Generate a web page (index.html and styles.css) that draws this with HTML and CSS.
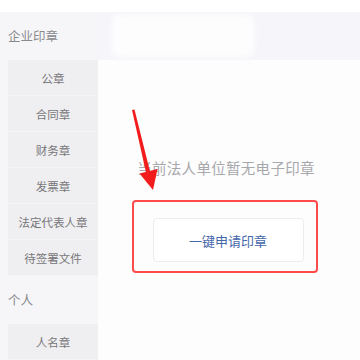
FILE: index.html
```html
<!DOCTYPE html>
<html>
<head>
<meta charset="utf-8">
<link rel="stylesheet" href="styles.css">
</head>
<body>
<div class="topbar"></div>
<div class="main">
  <aside class="sidebar">
    <div class="group-title">企业印章</div>
    <ul class="list">
      <li>公章</li>
      <li>合同章</li>
      <li>财务章</li>
      <li>发票章</li>
      <li>法定代表人章</li>
      <li>待签署文件</li>
    </ul>
    <div class="group-title">个人</div>
    <ul class="list">
      <li>人名章</li>
    </ul>
  </aside>
  <section class="content">
    <div class="header"><div class="blur"></div></div>
    <div class="empty">
      <p class="empty-text">当前法人单位暂无电子印章</p>
      <div class="highlight">
        <button class="apply">一键申请印章</button>
      </div>
    </div>
  </section>
</div>
<svg class="arrow" width="360" height="360" viewBox="0 0 360 360">
  <polygon points="132,110 134.5,109.5 150,171.5 146,172.5" fill="#f21c1c"/>
  <polygon points="139.5,173.5 157.5,169 153,190" fill="#f21c1c"/>
</svg>
</body>
</html>
```
FILE: styles.css
```css
* { box-sizing: border-box; }
html, body { margin: 0; padding: 0; }
body {
  width: 360px;
  height: 360px;
  overflow: hidden;
  background: #f7f7f9;
  font-family: "Noto Sans CJK SC", "Noto Sans", sans-serif;
  position: relative;
}
.topbar { height: 12px; background: #ffffff; }
.main { display: flex; height: 348px; }
.sidebar {
  width: 98px;
  flex: none;
  background: #f6f6f8;
  padding-left: 8px;
}
.group-title {
  height: 48px;
  line-height: 48px;
  font-size: 12.5px;
  color: #8a8a8e;
}
.list { list-style: none; margin: 0; padding: 0; }
.list li {
  height: 36px;
  line-height: 36px;
  text-align: center;
  font-size: 11.5px;
  color: #77777b;
  background: #efeef0;
  border-bottom: 1px solid #f4f4f6;
}
.content { flex: 1; background: #fdfdfd; display: flex; flex-direction: column; }
.header {
  height: 48px;
  background: #f6f6fa;
  padding: 3px 0 0 14px;
}
.blur {
  width: 142px;
  height: 42px;
  background: #fdfdfe;
  border-radius: 6px;
  filter: blur(3px);
}
.empty {
  display: flex;
  flex-direction: column;
  align-items: center;
  padding-top: 98px;
  padding-right: 6px;
}
.empty-text {
  margin: 0;
  font-size: 14.5px;
  line-height: 20px;
  color: #a8a8ac;
  letter-spacing: 0.3px;
}
.highlight {
  margin-top: 22px;
  margin-right: 3px;
  width: 186px;
  height: 73px;
  border: 2px solid #ff4b4b;
  border-radius: 4px;
  padding: 16px 0 0 19px;
}
.apply {
  display: block;
  width: 151px;
  height: 44px;
  background: #ffffff;
  border: 1px solid #ececee;
  border-radius: 4px;
  font-family: "Noto Sans CJK SC", sans-serif;
  font-size: 13px;
  color: #4466aa;
  padding: 0;
}
.arrow { position: absolute; left: 0; top: 0; pointer-events: none; }
```
